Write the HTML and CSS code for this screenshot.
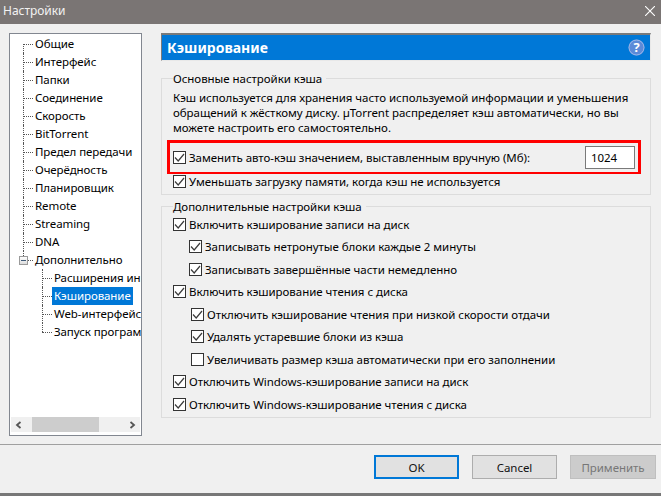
FILE: index.html
```html
<!DOCTYPE html>
<html lang="ru">
<head>
<meta charset="utf-8">
<title>Настройки</title>
<link rel="stylesheet" href="styles.css">
</head>
<body>
<svg class="defs" width="0" height="0"><symbol id="tick" viewBox="0 0 11 11"><path d="M1 5.500 4.200 9 10 2" fill="none" stroke="#3c3c3c" stroke-width="1.200"/></symbol></svg>
<div class="dialog">
  <header class="titlebar">
    <span>Настройки</span>
    <svg class="close" width="10" height="10" viewBox="0 0 10 10"><path d="M0 0 10 10M10 0 0 10" stroke="#fff" stroke-width="1.100"/></svg>
  </header>
  <main class="content">
    <nav class="tree">
      <div class="tree-body">
        <ul class="level1">
          <li class="node">Общие</li>
          <li class="node">Интерфейс</li>
          <li class="node">Папки</li>
          <li class="node">Соединение</li>
          <li class="node">Скорость</li>
          <li class="node">BitTorrent</li>
          <li class="node">Предел передачи</li>
          <li class="node">Очерёдность</li>
          <li class="node">Планировщик</li>
          <li class="node">Remote</li>
          <li class="node">Streaming</li>
          <li class="node">DNA</li>
          <li class="node node-last"><span class="expander"></span>Дополнительно</li>
        </ul>
        <ul class="level2">
          <li class="node">Расширения ин</li>
          <li class="node"><span class="selected">Кэширование</span></li>
          <li class="node">Web-интерфейс</li>
          <li class="node node-last">Запуск програм</li>
        </ul>
      </div>
      <div class="hscroll">
        <svg width="8" height="8" viewBox="0 0 8 8"><path d="M5.500 1 2 4l3.500 3" fill="none" stroke="#555" stroke-width="1.800"/></svg>
        <div class="track"><div class="thumb"></div></div>
        <svg width="8" height="8" viewBox="0 0 8 8"><path d="M2.500 1 6 4 2.500 7" fill="none" stroke="#555" stroke-width="1.800"/></svg>
      </div>
    </nav>
    <section class="panel">
      <div class="panel-head">
        <h1>Кэширование</h1>
        <svg class="help" width="17" height="17" viewBox="0 0 17 17"><circle cx="8.500" cy="8.500" r="8" fill="#5b8ad8"/><circle cx="8.500" cy="8.500" r="7.500" fill="none" stroke="#a9c2ec" stroke-width=".8"/><text x="8.500" y="13" text-anchor="middle" class="help-mark">?</text></svg>
      </div>
      <fieldset class="group group-main">
        <legend>Основные настройки кэша</legend>
        <p class="note">Кэш используется для хранения часто используемой информации и уменьшения обращений к жёсткому диску. µTorrent распределяет кэш автоматически, но вы можете настроить его самостоятельно.</p>
        <div class="highlight">
          <label class="check"><svg class="box"><use href="#tick"/></svg>Заменить авто-кэш значением, выставленным вручную (Мб):</label>
          <input class="value" type="text" value="1024">
        </div>
        <label class="check row-after"><svg class="box"><use href="#tick"/></svg>Уменьшать загрузку памяти, когда кэш не используется</label>
      </fieldset>
      <fieldset class="group group-extra">
        <legend>Дополнительные настройки кэша</legend>
        <label class="check row"><svg class="box"><use href="#tick"/></svg>Включить кэширование записи на диск</label>
        <label class="check row sub"><svg class="box"><use href="#tick"/></svg>Записывать нетронутые блоки каждые 2 минуты</label>
        <label class="check row sub"><svg class="box"><use href="#tick"/></svg>Записывать завершённые части немедленно</label>
        <label class="check row"><svg class="box"><use href="#tick"/></svg>Включить кэширование чтения с диска</label>
        <label class="check row sub2"><svg class="box"><use href="#tick"/></svg>Отключить кэширование чтения при низкой скорости отдачи</label>
        <label class="check row sub2"><svg class="box"><use href="#tick"/></svg>Удалять устаревшие блоки из кэша</label>
        <label class="check row sub2"><svg class="box"></svg>Увеличивать размер кэша автоматически при его заполнении</label>
        <label class="check row"><svg class="box"><use href="#tick"/></svg>Отключить Windows-кэширование записи на диск</label>
        <label class="check row"><svg class="box"><use href="#tick"/></svg>Отключить Windows-кэширование чтения с диска</label>
      </fieldset>
    </section>
  </main>
  <footer class="buttons">
    <button class="btn btn-default">OK</button>
    <button class="btn">Cancel</button>
    <button class="btn btn-disabled">Применить</button>
  </footer>
</div>
</body>
</html>
```
FILE: styles.css
```css
* { box-sizing: border-box; }
html, body { margin: 0; height: 100%; }
body {
  font-family: "Noto Sans", "Open Sans", sans-serif;
  font-size: 11.5px;
  letter-spacing: -0.04px;
  line-height: 15px;
  color: #000;
  background: #f0f0f0;
  overflow: hidden;
}
.defs { position: absolute; }
.dialog { width: 661px; height: 496px; display: flex; flex-direction: column; }
.titlebar {
  height: 24px;
  flex: none;
  background: #7a7574;
  color: #f2f2f2;
  font-size: 12px;
  display: flex;
  align-items: center;
  justify-content: space-between;
  padding: 0 6px 3px 3px;
}
.content {
  flex: none;
  height: 421px;
  padding: 9px 10px 0 9px;
  display: flex;
  gap: 19px;
  border-bottom: 1px solid #a0a0a0;
}
.tree {
  flex: none;
  width: 133px;
  height: 403px;
  border: 1px solid #828790;
  background: #fff;
  display: flex;
  flex-direction: column;
  letter-spacing: -0.08px;
}
.tree-body { flex: 1; overflow: hidden; padding-top: 1px; }
.tree ul { list-style: none; margin: 0; white-space: nowrap; }
.level1 { padding: 0 0 0 25px; }
.level2 { padding: 0 0 0 44px; }
.node { height: 18px; line-height: 18px; position: relative; }
.node::before {
  content: "";
  position: absolute;
  left: -12px;
  width: 10px;
  top: 9px;
  border-top: 1px dotted #555;
}
.node::after {
  content: "";
  position: absolute;
  left: -12px;
  top: 0;
  bottom: 0;
  border-left: 1px dotted #555;
}
.node-last::after { bottom: 9px; }
.level1 .node:first-child::after { top: 9px; }
.expander {
  position: absolute;
  left: -16px;
  top: 5px;
  width: 9px;
  height: 9px;
  border: 1px solid #9a9a9a;
  background: linear-gradient(#3f5a78, #3f5a78) center / 5px 1px no-repeat, linear-gradient(#fff, #dcdcdc);
  z-index: 1;
}
.selected {
  display: inline-block;
  margin-left: -2px;
  padding: 0 2px;
  width: 81px;
  background: #0078d7;
  color: #fff;
}
.hscroll {
  flex: none;
  height: 15px;
  margin: 0 1px 3px;
  background: #f0f0f0;
  display: flex;
  align-items: center;
  gap: 4px;
  padding: 0 4px;
}
.track { flex: 1; height: 100%; }
.thumb { width: 67px; height: 100%; margin-left: 5px; background: #cdcdcd; }
.panel { flex: 1; min-width: 0; display: flex; flex-direction: column; }
.panel-head {
  flex: none;
  height: 28px;
  background: #0078d7;
  color: #fff;
  border-top: 2px solid #7a7a7a;
  border-left: 1px solid #7a7a7a;
  border-right: 1px solid #e8e8e8;
  border-bottom: 1px solid #e8e8e8;
  display: flex;
  align-items: center;
  justify-content: space-between;
  padding: 0 5px 0 5px;
}
.panel-head h1 { margin: 0; font-size: 14px; font-weight: 700; letter-spacing: 0; }
.help-mark { font-size: 13px; font-weight: 700; fill: #fff; }
.group {
  margin: 0;
  padding: 0 0 0 11px;
  border: 1px solid #dcdcdc;
  min-width: 0;
}
.group legend { padding: 0 4px 0 0; margin-left: 0; line-height: 15px; }
.group-main { height: 124px; margin-top: 10px; }
.group-extra { height: 219px; margin-top: 4px; }
.group-extra legend { margin-bottom: -1px; }
.note { margin: 4px 6px 0 0; line-height: 15px; }
.check { display: flex; align-items: center; white-space: nowrap; }
.box {
  flex: none;
  width: 13px;
  height: 13px;
  border: 1px solid #333;
  background: #fff;
  margin-right: 3px;
}
.highlight {
  height: 34px;
  margin: 5px 9px 0 -6px;
  border: 3px solid #f00;
  border-bottom-width: 2px;
  padding: 0 3px 0 3px;
  display: flex;
  align-items: center;
  justify-content: space-between;
}
.value {
  width: 50px;
  height: 23px;
  border: 1px solid #7a7a7a;
  background: #fff;
  font: inherit;
  letter-spacing: inherit;
  color: #000;
  padding: 0 0 0 5px;
}
.row-after { margin-top: -1px; height: 16px; }
.row { height: 22.5px; }
.sub { padding-left: 16px; }
.sub2 { padding-left: 18px; }
.buttons {
  flex: 1;
  display: flex;
  justify-content: flex-end;
  gap: 13px;
  padding: 10px 5px 0 0;
  border-bottom: 3px solid #777;
}
.btn {
  width: 85px;
  height: 24px;
  font: inherit;
  letter-spacing: inherit;
  color: #111;
  background: #e1e1e1;
  border: 1px solid #adadad;
  padding: 0;
}
.btn-default { border: 2px solid #0078d7; }
.btn-disabled { width: 86px; background: #ccc; border-color: #bfbfbf; color: #777; }
```
